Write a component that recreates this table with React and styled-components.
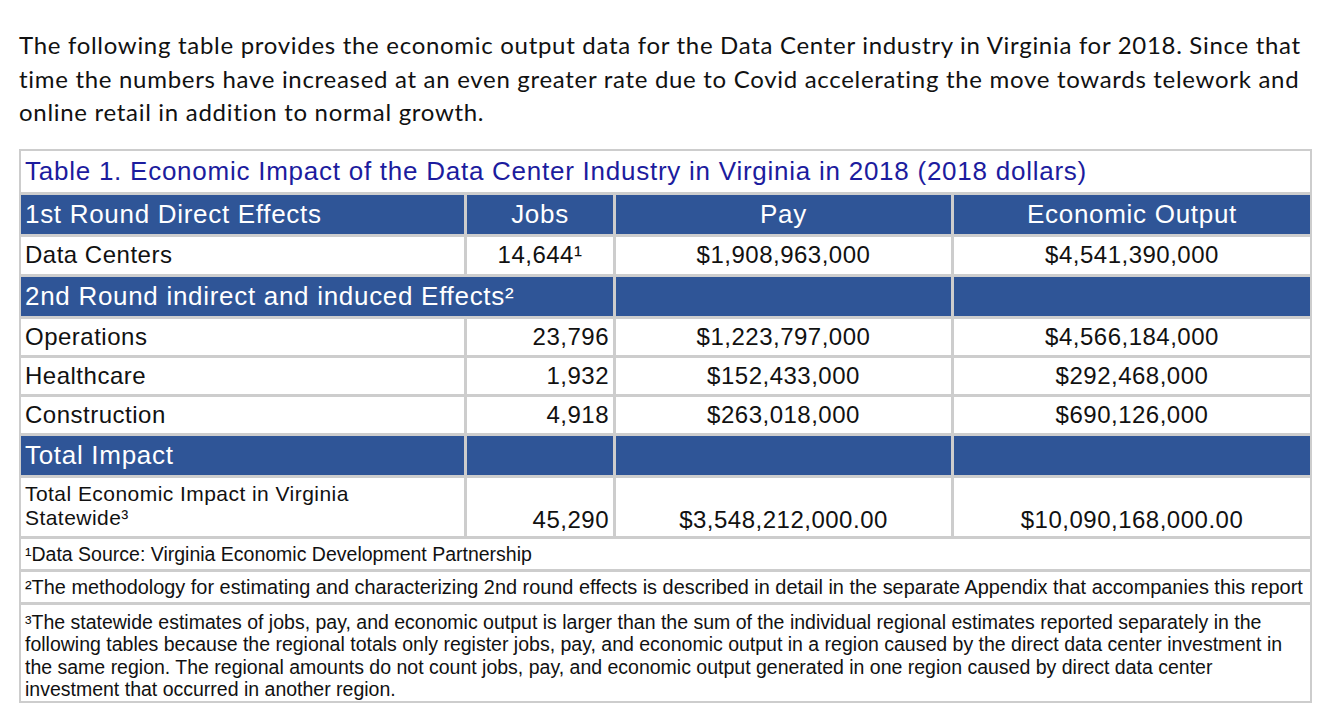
import React from 'react'
import styled, { createGlobalStyle } from 'styled-components'

const GlobalStyle = createGlobalStyle`
  html, body {
    margin: 0;
    padding: 0;
    background: #ffffff;
  }
`

const Page = styled.div`
  width: 1342px;
  height: 721px;
  padding: 28px 0 0 19px;
  box-sizing: border-box;
  overflow: hidden;
`

const Intro = styled.p`
  margin: 0 0 20px 0;
  font-family: Lato, 'Open Sans', sans-serif;
  font-size: 24px;
  letter-spacing: 0.7px;
  line-height: 33.5px;
  color: #111111;
  white-space: nowrap;
`

const Table = styled.div`
  display: grid;
  grid-template-columns: 443px 146px 335px 356px;
  grid-auto-rows: auto;
  gap: 3px;
  padding: 2px;
  width: 1293px;
  box-sizing: border-box;
  background: #cdcdcd;
  font-family: 'Liberation Sans', Arial, sans-serif;
`

const Title = styled.div`
  grid-column: 1 / -1;
  height: 41px;
  background: #ffffff;
  color: #1c1c9e;
  font-size: 26px;
  letter-spacing: 0.75px;
  display: flex;
  align-items: center;
  padding-left: 4px;
  white-space: nowrap;
`

const Cell = styled.div`
  grid-column: span ${p => p.$span || 1};
  height: ${p => p.$h || 36}px;
  background: ${p => (p.$band ? '#2f5597' : '#ffffff')};
  color: ${p => (p.$band ? '#ffffff' : '#111111')};
  font-size: ${p => (p.$band ? 26 : 24)}px;
  letter-spacing: ${p => (p.$band ? 0.7 : 0.5)}px;
  display: flex;
  align-items: ${p => p.$valign || 'center'};
  justify-content: ${p => p.$align || 'flex-start'};
  padding: 0 4px;
  box-sizing: border-box;
  white-space: nowrap;
`

const LabelStack = styled.div`
  font-size: 21px;
  letter-spacing: 0.45px;
  line-height: 24px;
  padding-top: 4px;
`

const Figure = styled.span`
  padding-bottom: 2px;
`

const Note = styled.div`
  grid-column: 1 / -1;
  background: #ffffff;
  color: #111111;
  font-size: ${p => p.$size || 19.5}px;
  line-height: 22.5px;
  padding: ${p => p.$pad || '4px 4px'};
  box-sizing: border-box;
  height: ${p => p.$h}px;
  white-space: nowrap;
`

const rows = [
  ['Operations', '23,796', '$1,223,797,000', '$4,566,184,000'],
  ['Healthcare', '1,932', '$152,433,000', '$292,468,000'],
  ['Construction', '4,918', '$263,018,000', '$690,126,000'],
]

const App = () => {
  return (
    <Page>
      <GlobalStyle />
      <Intro>
        The following table provides the economic output data for the Data Center industry in Virginia for 2018. Since that
        <br />
        time the numbers have increased at an even greater rate due to Covid accelerating the move towards telework and
        <br />
        online retail in addition to normal growth.
      </Intro>
      <Table>
        <Title>Table 1. Economic Impact of the Data Center Industry in Virginia in 2018 (2018 dollars)</Title>

        <Cell $band $h={39}>1st Round Direct Effects</Cell>
        <Cell $band $h={39} $align='center'>Jobs</Cell>
        <Cell $band $h={39} $align='center'>Pay</Cell>
        <Cell $band $h={39} $align='center'>Economic Output</Cell>

        <Cell $h={37}>Data Centers</Cell>
        <Cell $h={37} $align='center'>14,644¹</Cell>
        <Cell $h={37} $align='center'>$1,908,963,000</Cell>
        <Cell $h={37} $align='center'>$4,541,390,000</Cell>

        <Cell $band $h={39} $span={2}>2nd Round indirect and induced Effects²</Cell>
        <Cell $band $h={39} />
        <Cell $band $h={39} />

        {rows.map(([label, jobs, pay, output]) => (
          <React.Fragment key={label}>
            <Cell>{label}</Cell>
            <Cell $align='flex-end'>{jobs}</Cell>
            <Cell $align='center'>{pay}</Cell>
            <Cell $align='center'>{output}</Cell>
          </React.Fragment>
        ))}

        <Cell $band $h={39}>Total Impact</Cell>
        <Cell $band $h={39} />
        <Cell $band $h={39} />
        <Cell $band $h={39} />

        <Cell $h={58} $valign='flex-start'>
          <LabelStack>
            Total Economic Impact in Virginia
            <br />
            Statewide³
          </LabelStack>
        </Cell>
        <Cell $h={58} $valign='flex-end' $align='flex-end'><Figure>45,290</Figure></Cell>
        <Cell $h={58} $valign='flex-end' $align='center'><Figure>$3,548,212,000.00</Figure></Cell>
        <Cell $h={58} $valign='flex-end' $align='center'><Figure>$10,090,168,000.00</Figure></Cell>

        <Note $h={30}>¹Data Source: Virginia Economic Development Partnership</Note>
        <Note $h={30} $size={19.9}>²The methodology for estimating and characterizing 2nd round effects is described in detail in the separate Appendix that accompanies this report</Note>
        <Note $h={96} $pad='6px 4px'>
          ³The statewide estimates of jobs, pay, and economic output is larger than the sum of the individual regional estimates reported separately in the
          <br />
          following tables because the regional totals only register jobs, pay, and economic output in a region caused by the direct data center investment in
          <br />
          the same region. The regional amounts do not count jobs, pay, and economic output generated in one region caused by direct data center
          <br />
          investment that occurred in another region.
        </Note>
      </Table>
    </Page>
  )
}

export default App
